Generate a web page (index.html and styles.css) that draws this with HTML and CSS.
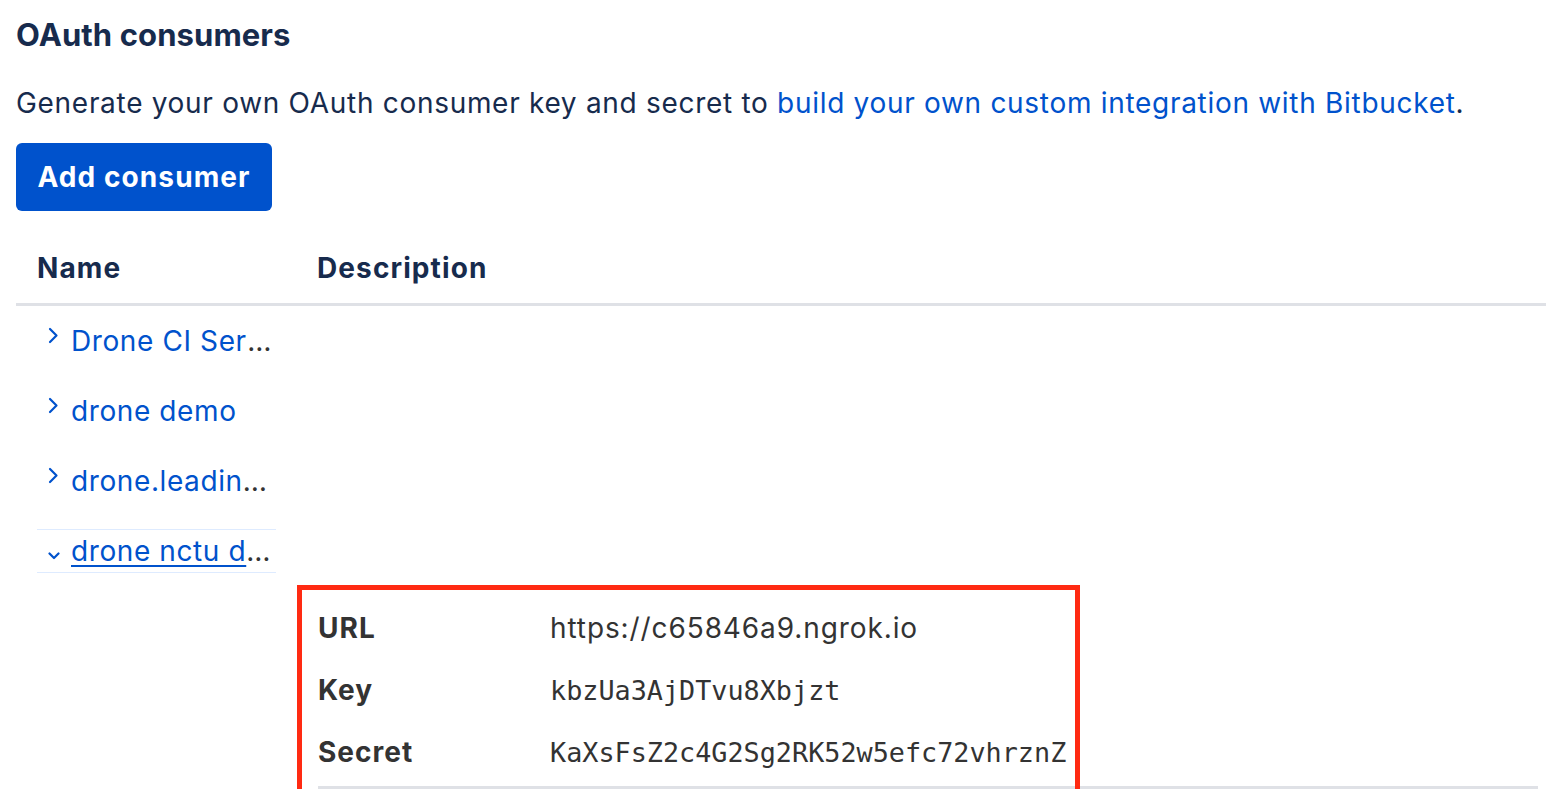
FILE: index.html
```html
<!DOCTYPE html>
<html>
<head>
<meta charset="utf-8">
<link rel="stylesheet" href="styles.css">
</head>
<body>
<div class="page">
  <h1 class="title">OAuth consumers</h1>
  <p class="intro">Generate your own OAuth consumer key and secret to <a class="link" href="#">build your own custom integration with Bitbucket</a>.</p>
  <button class="btn">Add consumer</button>

  <div class="table">
    <div class="thead">
      <div class="col-name">Name</div>
      <div class="col-desc">Description</div>
    </div>

    <div class="row">
      <div class="name-cell">
        <svg class="chev" width="12" height="28" viewBox="0 0 12 28"><path d="M2 2 L8.5 8.5 L2 15" fill="none" stroke="#0052cc" stroke-width="2.2" stroke-linejoin="round" stroke-linecap="round"/></svg>
        <span class="ell"><a class="link" href="#">Drone CI Server</a></span>
      </div>
    </div>
    <div class="row">
      <div class="name-cell">
        <svg class="chev" width="12" height="28" viewBox="0 0 12 28"><path d="M2 2 L8.5 8.5 L2 15" fill="none" stroke="#0052cc" stroke-width="2.2" stroke-linejoin="round" stroke-linecap="round"/></svg>
        <span class="ell"><a class="link" href="#">drone demo</a></span>
      </div>
    </div>
    <div class="row">
      <div class="name-cell">
        <svg class="chev" width="12" height="28" viewBox="0 0 12 28"><path d="M2 2 L8.5 8.5 L2 15" fill="none" stroke="#0052cc" stroke-width="2.2" stroke-linejoin="round" stroke-linecap="round"/></svg>
        <span class="ell"><a class="link" href="#">drone.leadingedge.io</a></span>
      </div>
    </div>
    <div class="row">
      <div class="name-cell open">
        <svg class="chev" width="12" height="28" viewBox="0 0 12 28"><path d="M1.5 16.5 L6 21 L10.5 16.5" fill="none" stroke="#0052cc" stroke-width="2.2" stroke-linejoin="round" stroke-linecap="round"/></svg>
        <span class="ell"><a class="link under" href="#">drone nctu demo</a></span>
      </div>
    </div>

    <div class="details">
      <div class="annot"></div>
      <div class="drow"><div class="dlabel">URL</div><div class="dval">https://c65846a9.ngrok.io</div></div>
      <div class="drow"><div class="dlabel">Key</div><div class="dval mono">kbzUa3AjDTvu8Xbjzt</div></div>
      <div class="drow"><div class="dlabel">Secret</div><div class="dval mono">KaXsFsZ2c4G2Sg2RK52w5efc72vhrznZ</div></div>
    </div>
  </div>
</div>
</body>
</html>
```

FILE: styles.css
```css
html, body {
  margin: 0;
  padding: 0;
  background: #ffffff;
  overflow: hidden;
}

.page {
  padding-left: 16px;
  font-family: Inter, "Liberation Sans", sans-serif;
  color: #172b4d;
}

.title {
  margin: 0;
  padding-top: 15px;
  font-size: 31px;
  line-height: 40px;
  font-weight: 700;
  letter-spacing: 0.1px;
}

.intro {
  margin: 28px 0 0;
  font-size: 28px;
  line-height: 40px;
  letter-spacing: 0.7px;
}

.link {
  color: #0052cc;
  text-decoration: none;
}

.link.under {
  text-decoration: underline;
  text-underline-offset: 4px;
  text-decoration-thickness: 2px;
}

.btn {
  display: block;
  margin-top: 20px;
  width: 256px;
  height: 68px;
  border: none;
  border-radius: 6px;
  background: #0052cc;
  color: #ffffff;
  font-family: Inter, "Liberation Sans", sans-serif;
  font-size: 28px;
  font-weight: 700;
  letter-spacing: 1.1px;
  padding: 0;
  cursor: pointer;
}

.table {
  margin-top: 22px;
}

.thead {
  display: flex;
  align-items: center;
  height: 70px;
  border-bottom: 3px solid #dfe1e6;
  font-size: 28px;
  font-weight: 700;
  letter-spacing: 1.1px;
}

.col-name {
  width: 301px;
  padding-left: 21px;
  box-sizing: border-box;
}

.row {
  height: 70px;
  display: flex;
  align-items: center;
  padding-left: 21px;
}

.name-cell {
  width: 239px;
  height: 44px;
  box-sizing: border-box;
  display: flex;
  align-items: center;
  padding-left: 11px;
  gap: 11px;
  font-size: 28px;
  letter-spacing: 0.6px;
  border-top: 1px solid transparent;
  border-bottom: 1px solid transparent;
}

.name-cell.open {
  border-top-color: #deebff;
  border-bottom-color: #deebff;
}

.chev {
  flex: none;
}

.ell {
  color: #333333;
  white-space: nowrap;
  overflow: hidden;
  text-overflow: ellipsis;
  line-height: 40px;
  min-width: 0;
}

.details {
  position: relative;
  margin-left: 302px;
  width: 1220px;
  padding-top: 11px;
  padding-bottom: 3px;
  border-bottom: 3px solid #dfe1e6;
  color: #333333;
}

.annot {
  position: absolute;
  left: -21px;
  top: -1px;
  width: 783px;
  height: 219px;
  box-sizing: border-box;
  border: 5px solid #ff2a12;
  pointer-events: none;
}

.drow {
  display: flex;
  align-items: center;
  height: 62px;
}

.dlabel {
  width: 232px;
  font-size: 28px;
  font-weight: 700;
  letter-spacing: 1px;
}

.dval {
  font-size: 28px;
  letter-spacing: 0.9px;
}

.dval.mono {
  font-family: "DejaVu Sans Mono", "Liberation Mono", monospace;
  font-size: 26.8px;
  letter-spacing: 0;
}
```
